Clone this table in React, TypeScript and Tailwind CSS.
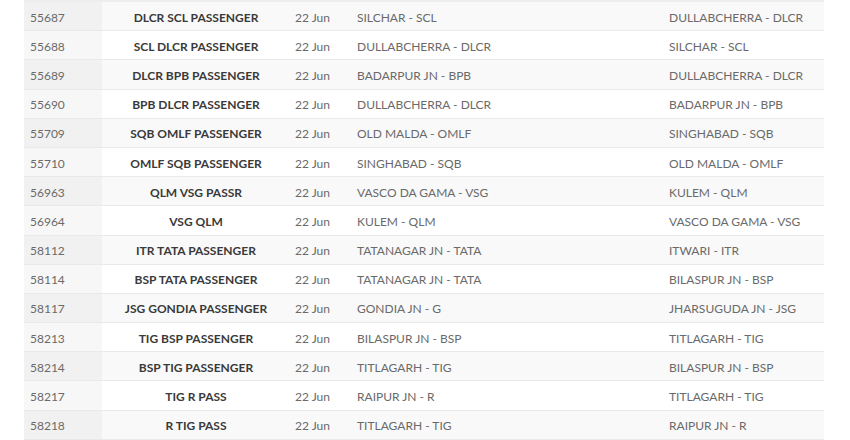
const rows = [
  ["55687", "DLCR SCL PASSENGER", "22 Jun", "SILCHAR - SCL", "DULLABCHERRA - DLCR"],
  ["55688", "SCL DLCR PASSENGER", "22 Jun", "DULLABCHERRA - DLCR", "SILCHAR - SCL"],
  ["55689", "DLCR BPB PASSENGER", "22 Jun", "BADARPUR JN - BPB", "DULLABCHERRA - DLCR"],
  ["55690", "BPB DLCR PASSENGER", "22 Jun", "DULLABCHERRA - DLCR", "BADARPUR JN - BPB"],
  ["55709", "SQB OMLF PASSENGER", "22 Jun", "OLD MALDA - OMLF", "SINGHABAD - SQB"],
  ["55710", "OMLF SQB PASSENGER", "22 Jun", "SINGHABAD - SQB", "OLD MALDA - OMLF"],
  ["56963", "QLM VSG PASSR", "22 Jun", "VASCO DA GAMA - VSG", "KULEM - QLM"],
  ["56964", "VSG QLM", "22 Jun", "KULEM - QLM", "VASCO DA GAMA - VSG"],
  ["58112", "ITR TATA PASSENGER", "22 Jun", "TATANAGAR JN - TATA", "ITWARI - ITR"],
  ["58114", "BSP TATA PASSENGER", "22 Jun", "TATANAGAR JN - TATA", "BILASPUR JN - BSP"],
  ["58117", "JSG GONDIA PASSENGER", "22 Jun", "GONDIA JN - G", "JHARSUGUDA JN - JSG"],
  ["58213", "TIG BSP PASSENGER", "22 Jun", "BILASPUR JN - BSP", "TITLAGARH - TIG"],
  ["58214", "BSP TIG PASSENGER", "22 Jun", "TITLAGARH - TIG", "BILASPUR JN - BSP"],
  ["58217", "TIG R PASS", "22 Jun", "RAIPUR JN - R", "TITLAGARH - TIG"],
  ["58218", "R TIG PASS", "22 Jun", "TITLAGARH - TIG", "RAIPUR JN - R"],
]

export default function App() {
  return (
    <div className="h-[440px] w-[850px] overflow-hidden bg-white font-['Lato',sans-serif] text-[12px] text-[#6a6a6a]">
      <div className="ml-[24px] w-[800px] border-t-2 border-[#eeeeee]">
        {rows.map((r, i) => (
          <div
            key={r[0]}
            className={
              "flex h-[29.2px] border-b border-[#e9e9e9] " +
              (i % 2 === 0 ? "bg-[#f9f9f9]" : "bg-white")
            }
          >
            <div
              className={
                "flex w-[78px] items-center pl-[6px] pt-[3px] " +
                (i % 2 === 0 ? "bg-[#f1f1f1]" : "bg-[#f7f7f7]")
              }
            >
              {r[0]}
            </div>
            <div className="flex w-[188px] items-center justify-center pt-[3px] font-bold text-[#3a3a3a]">{r[1]}</div>
            <div className="flex w-[62px] items-center pl-[5px] pt-[3px]">{r[2]}</div>
            <div className="flex w-[312px] items-center pl-[5px] pt-[3px]">{r[3]}</div>
            <div className="flex flex-1 items-center pl-[5px] pt-[3px]">{r[4]}</div>
          </div>
        ))}
      </div>
    </div>
  )
}
